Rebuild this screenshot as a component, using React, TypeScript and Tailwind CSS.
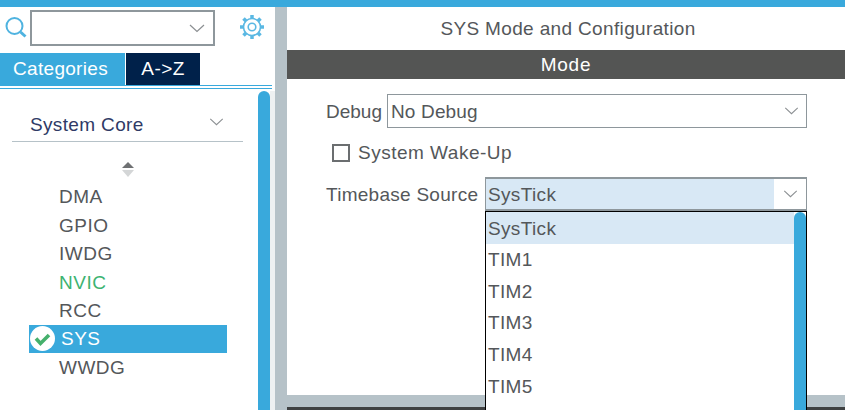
const font = { fontFamily: '"Liberation Sans", Arial, sans-serif' };

function Chevron({ className }: { className: string }) {
  return (
    <svg className={className} viewBox="0 0 16 9" fill="none" stroke="#8b8f92" strokeWidth={1.2}>
      <path d="M1 1l7 6.5L15 1" />
    </svg>
  );
}

function SearchIcon() {
  return (
    <svg className="h-[21px] w-[22px] shrink-0" viewBox="0 0 22 21" fill="none" stroke="#4fb3e0">
      <circle cx="9.5" cy="9" r="8" strokeWidth={2} />
      <path d="M15.5 15l5 4.5" strokeWidth={3} />
    </svg>
  );
}

function GearIcon() {
  const teeth = [0, 45, 90, 135, 180, 225, 270, 315];
  return (
    <svg className="h-[26px] w-[26px]" viewBox="0 0 26 26" fill="none" stroke="#5ab8e3">
      <circle cx="13" cy="13" r="8.5" strokeWidth={1.6} />
      <circle cx="13" cy="13" r="3.8" strokeWidth={1.6} />
      {teeth.map((a) => (
        <path key={a} d="M13 1v3.5" strokeWidth={3.5} transform={`rotate(${a} 13 13)`} />
      ))}
    </svg>
  );
}

function CheckBadge() {
  return (
    <svg className="h-[25px] w-[25px] shrink-0" viewBox="0 0 25 25">
      <circle cx="12.5" cy="12.5" r="12.5" fill="#fff" />
      <path d="M6 12.5l4.5 5 8.5-8.5" fill="none" stroke="#45b06c" strokeWidth={3.6} />
    </svg>
  );
}

const items = ['DMA', 'GPIO', 'IWDG', 'NVIC', 'RCC', 'SYS', 'WWDG'];
const options = ['SysTick', 'TIM1', 'TIM2', 'TIM3', 'TIM4', 'TIM5'];

export default function App() {
  return (
    <div className="flex h-[410px] w-[845px] flex-col overflow-hidden bg-white text-[19px] text-[#54575a]" style={font}>
      <div className="h-[7px] shrink-0 bg-[#39a9dc]" />
      <div className="flex min-h-0 flex-1">
        {/* left panel */}
        <div className="flex w-[275px] shrink-0 flex-col">
          <div className="flex h-[46px] shrink-0 items-start pt-[3px]">
            <div className="ml-[5px] mr-[3px] mt-[7px]">
              <SearchIcon />
            </div>
            <div className="flex h-[36px] w-[185px] items-center justify-end border-2 border-[#8e979c] pr-[8px]">
              <Chevron className="h-[9px] w-[16px]" />
            </div>
            <div className="ml-[24px] mt-[4px]">
              <GearIcon />
            </div>
          </div>
          <div className="flex h-[32px] shrink-0 tracking-[0.3px]">
            <div className="flex w-[125px] items-center justify-center bg-[#39a9dc] pr-[4px] text-white">Categories</div>
            <div className="ml-px flex w-[74px] items-center justify-center bg-[#00214a] tracking-[0.4px] text-white">A-&gt;Z</div>
          </div>
          <div className="h-[4px] w-[272px] shrink-0 border-y border-[#39a9dc]" />
          <div className="flex min-h-0 flex-1 pt-[2px]">
            <div className="w-[258px] shrink-0">
              <div className="ml-[12px] mt-[20px] flex h-[31px] w-[231px] items-start justify-between border-b border-[#b6c2c8] pl-[18px] pr-[19px]">
                <span className="tracking-[0.35px] text-[#2f3a66]">System Core</span>
                <Chevron className="mt-[7px] h-[8px] w-[15px]" />
              </div>
              <div className="ml-[121px] mt-[20px] flex h-[17px] w-[13px] flex-col items-center">
                <div className="h-0 w-0 border-x-[6px] border-b-[6px] border-x-transparent border-b-[#6f7173]" />
                <div className="mt-[2px] h-0 w-0 border-x-[6px] border-t-[7px] border-x-transparent border-t-[#d4d6d7]" />
              </div>
              <div className="ml-[29px] mt-[3px] w-[198px]">
                {items.map((item) =>
                  item === 'SYS' ? (
                    <div key={item} className="flex h-[28.5px] items-center bg-[#39a9dc] pl-px tracking-[0.5px] text-white">
                      <CheckBadge />
                      <span className="ml-[6px]">{item}</span>
                    </div>
                  ) : (
                    <div
                      key={item}
                      className={`flex h-[28.5px] items-center pl-[30px] pt-[2px] tracking-[0.5px] ${item === 'NVIC' ? 'text-[#3cb371]' : ''}`}
                    >
                      {item}
                    </div>
                  ),
                )}
              </div>
            </div>
            <div className="w-[12px] shrink-0 rounded-t-[6px] bg-[#39a9dc]" />
            <div className="w-[5px] shrink-0 bg-[#eef1f2]" />
          </div>
        </div>
        <div className="w-[12px] shrink-0 bg-[#b6c2c8]" />
        {/* right panel */}
        <div className="flex min-w-0 flex-1 flex-col">
          <div className="flex h-[43px] shrink-0 items-center justify-center pl-[4px] pt-[2px] tracking-[0.35px]">SYS Mode and Configuration</div>
          <div className="flex h-[29px] shrink-0 items-center justify-center bg-[#545554] pt-[2px] tracking-[0.8px] text-white">Mode</div>
          <div className="min-h-0 flex-1">
            <div className="mt-[15px] flex h-[34px] items-center pl-[39px]">
              <span className="w-[61px] pt-[2px]">Debug</span>
              <div className="flex h-[34px] w-[420px] items-center justify-between border border-[#8e979c] pl-[3px] pr-[7px] tracking-[0.15px]">
                <span className="pt-[2px]">No Debug</span>
                <Chevron className="h-[8px] w-[15px]" />
              </div>
            </div>
            <div className="mt-[16px] flex h-[17px] items-center pl-[45px]">
              <div className="h-[18px] w-[18px] border-2 border-[#6b6e70]" />
              <span className="ml-[8px] pt-[2px] tracking-[0.5px]">System Wake-Up</span>
            </div>
            <div className="mt-[16px] flex h-[34px] items-center pl-[39px]">
              <span className="w-[159px] pt-[2px] tracking-[0.27px]">Timebase Source</span>
              <div className="relative h-[34px] w-[322px]">
                <div className="flex h-full border-x border-y-2 border-[#8e979c]">
                  <div className="flex flex-1 items-center bg-[#d8e8f5] pl-[2px] pt-[2px] tracking-[0.35px]">SysTick</div>
                  <div className="flex w-[32px] items-center justify-center">
                    <Chevron className="h-[8px] w-[15px]" />
                  </div>
                </div>
                <div className="absolute left-0 top-[34px] flex h-[200px] w-[322px] border-x border-t border-black bg-white">
                  <div className="flex-1">
                    {options.map((option, i) => (
                      <div
                        key={option}
                        className={`flex h-[31.6px] items-center pl-[2px] pt-[2px] tracking-[0.35px] ${i === 0 ? 'bg-[#d8e8f5]' : ''}`}
                      >
                        {option}
                      </div>
                    ))}
                  </div>
                  <div className="w-[12px] rounded-t-[6px] bg-[#39a9dc]" />
                </div>
              </div>
            </div>
          </div>
          <div className="h-[12px] shrink-0 bg-[#b6c2c8]" />
          <div className="h-[3px] shrink-0 bg-[#3f4142]" />
        </div>
      </div>
    </div>
  );
}
